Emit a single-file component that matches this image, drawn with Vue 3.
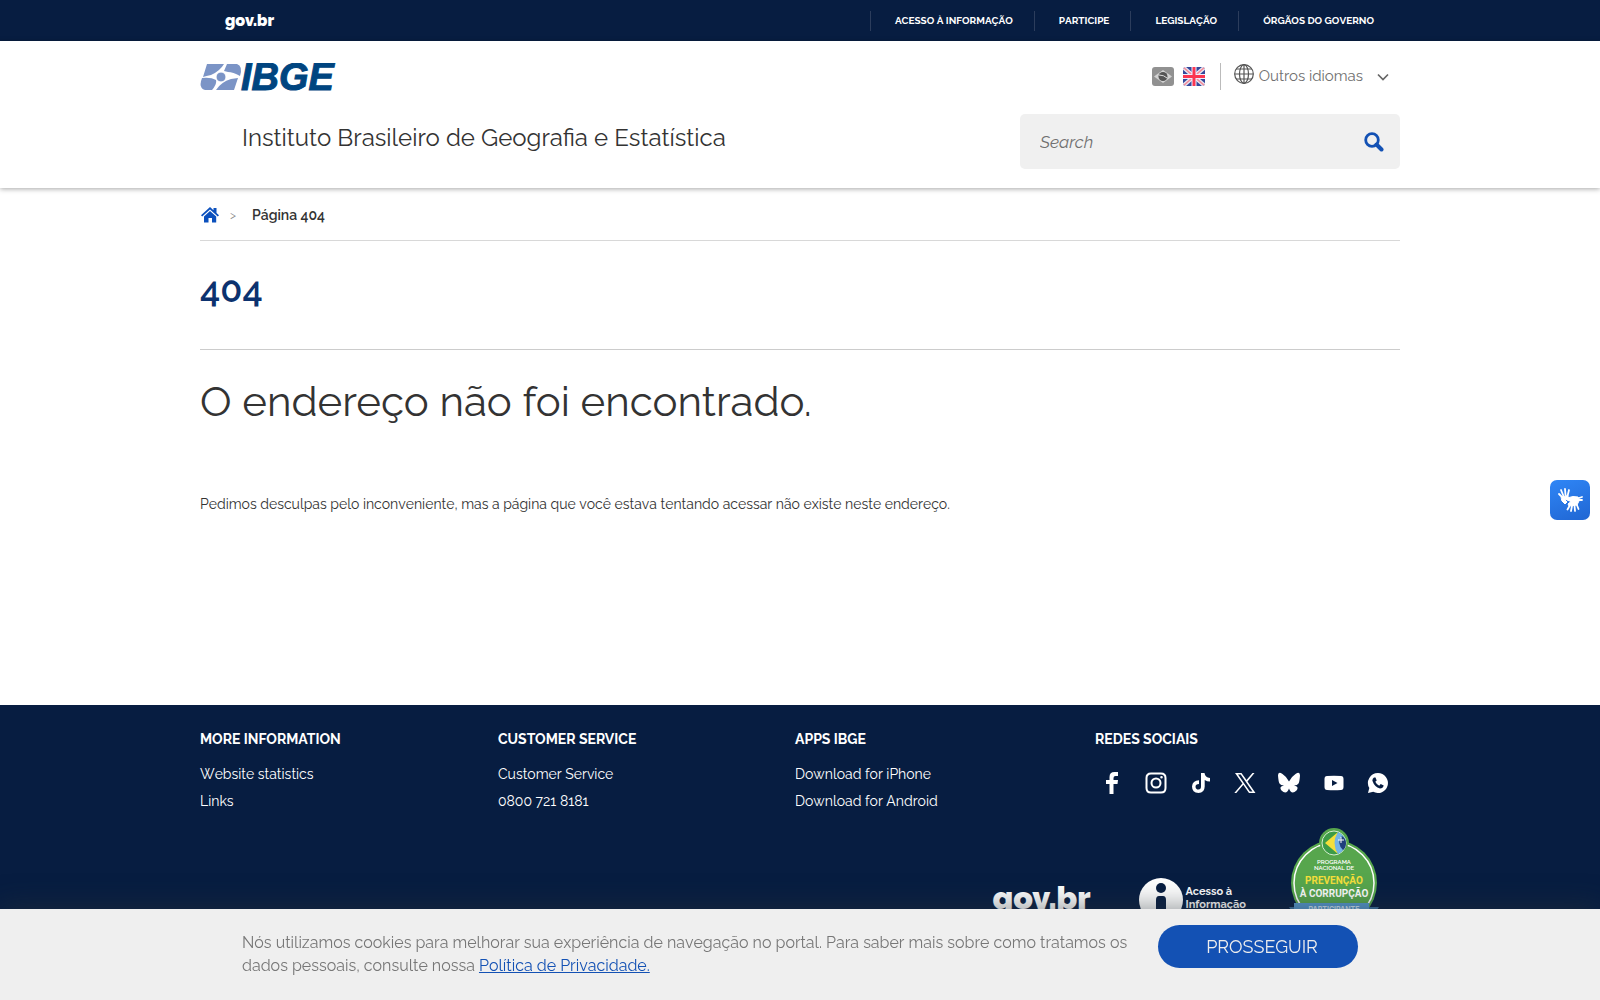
<template>
  <div class="page">
    <div class="gov-bar">
      <div class="container gov-bar-inner">
        <a href="#" class="gov-logo">gov.br</a>
        <nav class="gov-links">
          <a v-for="item in govLinks" :key="item" href="#">{{ item }}</a>
        </nav>
      </div>
    </div>

    <header class="header">
      <div class="container">
        <div class="header-top">
          <a href="#" class="ibge-logo" aria-label="IBGE">
            <svg width="150" height="36" viewBox="0 0 150 36">
              <g fill="#7b94c6">
                <path d="M7 1H24Q20 8 11 12Q6 13 3 14Z" />
                <path d="M27 1H37Q43 3 40 13Q33 9 28 9L24 8Z" />
                <path d="M2 15Q11 14 16 17Q17 21 12 27H5Q-2 25 2 15Z" />
                <path d="M38 15L34 27H16Q21 19 31 16Z" />
                <circle cx="21" cy="14" r="5" stroke="#fff" stroke-width="1" />
              </g>
              <text x="41" y="27" class="ibge-word">IBGE</text>
            </svg>
          </a>
          <div class="languages">
            <a href="#" class="flag" aria-label="Português">
              <svg width="22" height="19" viewBox="0 0 22 19">
                <rect width="22" height="19" rx="3" fill="#919191" />
                <path d="M2 9.500L11 3L20 9.500L11 16Z" fill="#d2d2d2" />
                <circle cx="11" cy="9.500" r="4.500" fill="#555" />
                <path d="M7 8Q12 8 15 11" fill="none" stroke="#ddd" stroke-width="1" />
              </svg>
            </a>
            <a href="#" class="flag" aria-label="English">
              <svg width="22" height="19" viewBox="0 0 22 19">
                <defs>
                  <clipPath id="uk"><rect width="22" height="19" rx="3" /></clipPath>
                </defs>
                <g clip-path="url(#uk)">
                  <rect width="22" height="19" fill="#34489b" />
                  <path d="M0 0L22 19M22 0L0 19" stroke="#e6e8f2" stroke-width="4" />
                  <path d="M0 0L22 19M22 0L0 19" stroke="#f58a9a" stroke-width="1.500" />
                  <path d="M11 0V19M0 9.500H22" stroke="#eef" stroke-width="5" />
                  <path d="M11 0V19M0 9.500H22" stroke="#fb3650" stroke-width="3" />
                </g>
              </svg>
            </a>
            <button type="button" class="other-languages">
              <svg class="globe" width="20" height="20" viewBox="0 0 20 20" fill="none" stroke="#555" stroke-width="1.200">
                <circle cx="10" cy="10" r="9.300" />
                <ellipse cx="10" cy="10" rx="4.500" ry="9.300" />
                <path d="M10 .7V19.300M.7 10H19.300M2.200 5H17.800M2.200 15H17.800" />
              </svg>
              <span>Outros idiomas</span>
              <svg class="chevron" width="14" height="10" viewBox="0 0 14 10" fill="none" stroke="#666" stroke-width="1.700">
                <path d="M2 2.500L7 7.500L12 2.500" />
              </svg>
            </button>
          </div>
        </div>
        <div class="header-bottom">
          <p class="site-name">Instituto Brasileiro de Geografia e Estatística</p>
          <form class="search" @submit.prevent>
            <input v-model="query" type="text" placeholder="Search" aria-label="Search" />
            <button type="submit" aria-label="Search">
              <svg width="20" height="20" viewBox="0 0 20 20" fill="none" stroke="#1351b4">
                <circle cx="8" cy="8" r="6.300" stroke-width="2.800" />
                <path d="M12.500 12.500L17.500 17.500" stroke-width="4" stroke-linecap="round" />
              </svg>
            </button>
          </form>
        </div>
      </div>
    </header>

    <main class="container main">
      <nav class="breadcrumb">
        <a href="#" aria-label="Home">
          <svg width="18" height="16" viewBox="0 0 18 16" fill="#0b50bd">
            <path d="M9 0L12.500 3.200V1H15.500V6L18 8.300L16.800 9.500L9 2.600L1.200 9.500L0 8.300Z" />
            <path d="M9 4L15.200 9.500V15.500H11V11H7.500V15.500H3V9.500Z" />
          </svg>
        </a>
        <span class="arrow">&gt;</span>
        <strong>Página 404</strong>
      </nav>
      <h1>404</h1>
      <h2>O endereço não foi encontrado.</h2>
      <p class="message">
        Pedimos desculpas pelo inconveniente, mas a página que você estava tentando acessar não existe neste endereço.
      </p>
    </main>

    <footer class="footer">
      <div class="container">
        <div class="footer-columns">
          <section v-for="column in columns" :key="column.title">
            <h3>{{ column.title }}</h3>
            <ul>
              <li v-for="link in column.links" :key="link"><a href="#">{{ link }}</a></li>
            </ul>
          </section>
          <section>
            <h3>REDES SOCIAIS</h3>
            <div class="social">
              <a v-for="icon in socialIcons" :key="icon.name" href="#" :aria-label="icon.name">
                <svg width="24" height="24" viewBox="0 0 24 24">
                  <path :d="icon.path" fill="#fff" fill-rule="evenodd" />
                </svg>
              </a>
            </div>
          </section>
        </div>

        <div class="footer-logos">
          <a href="#" class="gov-logo large">gov.br</a>
          <a href="#" class="info-access">
            <svg width="44" height="44" viewBox="0 0 44 44">
              <circle cx="22" cy="22" r="22" fill="#fff" />
              <circle cx="22" cy="10" r="5" fill="#071d41" />
              <path d="M17 22Q17 18 20 18H24Q27 18 27 22V38H17Z" fill="#071d41" />
            </svg>
            <span>Acesso à<br />Informação</span>
          </a>
          <a href="#" aria-label="Programa Nacional de Prevenção à Corrupção">
            <svg width="90" height="106" viewBox="0 0 90 106">
              <circle cx="45" cy="15" r="15" fill="#57a64d" />
              <circle cx="45" cy="55" r="43" fill="#57a64d" />
              <circle cx="45" cy="55" r="40" fill="none" stroke="#fff" stroke-width="1.500" />
              <circle cx="45" cy="15" r="14" fill="#57a64d" />
              <circle cx="45" cy="15" r="12" fill="#3c9b48" stroke="#d7edcf" stroke-width="1" />
              <path d="M36 15L49 4Q44 15 49 26Z" fill="#f4df3b" />
              <path d="M49 4Q57 8 57 15Q57 22 49 26Q42 15 49 4Z" fill="#74b4e6" />
              <path d="M53 8Q57 11 57 15Q57 20 54 22Q47 15 53 8Z" fill="#203f7c" />
              <path d="M49 12H55M52 9V15" stroke="#fff" stroke-width="1" />
              <g text-anchor="middle" fill="#fff">
                <text x="45" y="36" class="badge-small">PROGRAMA</text>
                <text x="45" y="42" class="badge-small">NACIONAL DE</text>
                <text x="45" y="56" class="badge-title yellow">PREVENÇÃO</text>
                <text x="45" y="69" class="badge-title">À CORRUPÇÃO</text>
              </g>
              <path d="M0 79H90L85 86L90 92H0L5 86Z" fill="#396e9f" />
              <path d="M5 75H80V89H5Z" fill="#5598cf" />
              <text x="45" y="84" text-anchor="middle" class="badge-ribbon">PARTICIPANTE</text>
            </svg>
          </a>
        </div>
      </div>
    </footer>

    <button type="button" class="libras" aria-label="Libras">
      <svg width="26" height="26" viewBox="0 0 26 26" fill="none" stroke="#fff" stroke-linecap="round">
        <path d="M5 10L2 7M6.500 9L4 3M8.500 8L8 2M10.500 9L12 3" stroke-width="1.800" />
        <path d="M4.500 10L11 8.500L11 12L8 13L10 15L8 17L5 14Z" fill="#fff" stroke-width="1" />
        <path d="M10 11L16 9.500L21 10L22.500 13L20 18L12 19L11 17L14 14.500L10 13Z" fill="#fff" stroke-width="1" />
        <path d="M12.500 19L10.500 22.500M15 19L14 24M17.500 18.500L18 24M19.500 17L21.500 22M22 11L25 10M22.500 13L25 13" stroke-width="1.800" />
      </svg>
    </button>

    <div v-if="showCookies" class="cookie-bar">
      <div class="container cookie-inner">
        <p>
          Nós utilizamos cookies para melhorar sua experiência de navegação no portal. Para saber mais sobre como tratamos os
          dados pessoais, consulte nossa <a href="#">Política de Privacidade.</a>
        </p>
        <button type="button" @click="showCookies = false">PROSSEGUIR</button>
      </div>
    </div>
  </div>
</template>

<script setup>
import { ref } from 'vue'

const query = ref('')
const showCookies = ref(true)

const govLinks = ['ACESSO À INFORMAÇÃO', 'PARTICIPE', 'LEGISLAÇÃO', 'ÓRGÃOS DO GOVERNO']

const columns = [
  { title: 'MORE INFORMATION', links: ['Website statistics', 'Links'] },
  { title: 'CUSTOMER SERVICE', links: ['Customer Service', '0800 721 8181'] },
  { title: 'APPS IBGE', links: ['Download for iPhone', 'Download for Android'] },
]

const socialIcons = [
  { name: 'Facebook', path: 'M9.500 23V13H6V9H9.500V6Q9.500 1 14.500 1H18V5H15.500Q13.500 5 13.500 7V9H18L17.500 13H13.500V23Z' },
  {
    name: 'Instagram',
    path: 'M7 1.500H17Q22.500 1.500 22.500 7V17Q22.500 22.500 17 22.500H7Q1.500 22.500 1.500 17V7Q1.500 1.500 7 1.500ZM7 3.500Q3.500 3.500 3.500 7V17Q3.500 20.500 7 20.500H17Q20.500 20.500 20.500 17V7Q20.500 3.500 17 3.500ZM12 6.500A5.500 5.500 0 1 1 12 17.500A5.500 5.500 0 1 1 12 6.500ZM12 8.500A3.500 3.500 0 1 0 12 15.500A3.500 3.500 0 1 0 12 8.500ZM17.500 5A1.300 1.300 0 1 1 17.500 7.600A1.300 1.300 0 1 1 17.500 5Z',
  },
  {
    name: 'TikTok',
    path: 'M12 2H15.500Q16 6.500 21 7V10.500Q18 10.500 15.700 9V15.500Q15.500 22 9.500 22Q3 21.500 3 15.500Q3.500 9.500 10 9.300V13Q6.500 13 6.500 15.700Q6.700 18.500 9.500 18.500Q12 18.300 12 15.500Z',
  },
  { name: 'X', path: 'M2 2H8.500L13.500 9L19.500 2H21.500L14.500 10.500L22.500 22H16L10.300 13.700L3.300 22H1.300L9.400 12.400ZM5 3.500L16.800 20.500H19.500L7.700 3.500Z' },
  {
    name: 'Bluesky',
    path: 'M12 10.500Q10 6 5.500 3Q1 0 1 4.500Q1.500 11 2.500 12.500Q3.500 14.500 7 14.500Q1.500 15.500 4.500 19.500Q9.500 24.500 12 17.500Q14.500 24.500 19.500 19.500Q22.500 15.500 17 14.500Q20.500 14.500 21.500 12.500Q22.500 11 23 4.500Q23 0 18.500 3Q14 6 12 10.500Z',
  },
  { name: 'YouTube', path: 'M5 5Q12 4.500 19 5Q21.500 5 21.500 8V16Q21.500 19 19 19Q12 19.500 5 19Q2.500 19 2.500 16V8Q2.500 5 5 5ZM10 9V15L15.500 12Z' },
  {
    name: 'WhatsApp',
    path: 'M12 2A10 10 0 1 1 7.200 20.800L2 22L3.300 17A10 10 0 0 1 12 2ZM8 6.500Q6 8 6.500 10Q8.500 16 14 17.500Q17 17.500 17.700 14.500L14.700 13L13.200 14.700Q10.500 13.500 9.300 10.800L10.700 9.500L9.500 6.500Z',
  },
]
</script>

<style>
body {
  background: #fff;
}
</style>

<style scoped>
.page {
  font-family: Raleway, Lato, sans-serif;
  font-size: 14px;
  font-variant-numeric: oldstyle-nums;
  color: #333;
}

.container {
  max-width: 1200px;
  margin: 0 auto;
}

a {
  color: inherit;
  text-decoration: none;
}

button {
  border: 0;
  padding: 0;
  background: none;
  font: inherit;
  cursor: pointer;
}

svg {
  display: block;
}

.gov-bar {
  background: #071d41;
  color: #fff;
}

.gov-bar-inner {
  display: flex;
  justify-content: space-between;
  align-items: center;
  height: 41px;
}

.gov-logo {
  margin-left: 25px;
  font: 900 16px/20px Raleway, sans-serif;
  color: #fff;
}

.gov-links {
  display: flex;
}

.gov-links a {
  padding: 0 21px 0 24px;
  border-left: 1px solid #2c3d5c;
  font-size: 10px;
  font-weight: 700;
  line-height: 20px;
  font-kerning: none;
}

.gov-links a:last-child {
  padding-right: 26px;
}

.header {
  background: #fff;
  box-shadow: 0 1px 5px rgba(0, 0, 0, 0.35);
}

.header-top {
  display: flex;
  justify-content: space-between;
  align-items: flex-start;
  padding-top: 22px;
}

.ibge-word {
  font: italic 700 38px "Liberation Sans", sans-serif;
  fill: #004580;
  stroke: #004580;
  stroke-width: 1px;
}

.languages {
  display: flex;
  align-items: center;
  gap: 9px;
}

.other-languages {
  display: flex;
  align-items: center;
  gap: 5px;
  margin-left: 6px;
  padding: 0 10px 0 13px;
  border-left: 1px solid #bbb;
  font-size: 15px;
  line-height: 27px;
  color: #707070;
}

.globe {
  margin-bottom: 5px;
}

.chevron {
  margin-left: 8px;
}

.header-bottom {
  display: flex;
  justify-content: space-between;
  padding: 15px 0 19px;
}

.site-name {
  margin: 8px 0 0 42px;
  font-size: 24px;
  line-height: 32px;
}

.search {
  display: flex;
  align-items: center;
  width: 380px;
  height: 55px;
  border-radius: 5px;
  background: #f0f0f0;
}

.search input {
  flex: 1;
  min-width: 0;
  padding: 0 20px;
  border: 0;
  background: none;
  font: italic 17px Raleway, Lato, sans-serif;
  outline: none;
}

.search input::placeholder {
  color: #707070;
}

.search button {
  padding: 0 16px;
}

.main {
  min-height: 517px;
}

.breadcrumb {
  display: flex;
  align-items: center;
  height: 50px;
  padding: 2px 1px 0;
  border-bottom: 1px solid #d8d8d8;
}

.breadcrumb .arrow {
  margin: 0 16px 0 11px;
  font-size: 12px;
  color: #888;
}

.breadcrumb strong {
  font-weight: 600;
}

h1 {
  margin: 0;
  padding: 26px 0 38px;
  border-bottom: 1px solid #ccc;
  font-size: 36px;
  line-height: 44px;
  font-weight: 600;
  color: #0c326f;
}

h2 {
  margin: 24px 0 0;
  font-size: 42px;
  line-height: 56px;
  font-weight: 400;
}

.message {
  margin: 64px 0 0;
  line-height: 20px;
  font-kerning: none;
}

.footer {
  background: #071d41;
  color: #fff;
}

.footer-columns {
  display: grid;
  grid-template-columns: 298px 297px 300px 1fr;
  padding-top: 24px;
}

h3 {
  margin: 0 0 12px;
  font-size: 14px;
  line-height: 20px;
  font-weight: 700;
}

ul {
  margin: 0;
  padding: 0;
  list-style: none;
}

li {
  line-height: 27px;
  font-kerning: none;
}

.social {
  display: flex;
  justify-content: space-between;
  padding: 10px 10px 0 5px;
}

.footer-logos {
  display: flex;
  justify-content: flex-end;
  align-items: flex-start;
  padding: 13px 21px 70px 0;
}

.gov-logo.large {
  margin: 50px 0 0;
  font-size: 32px;
  line-height: 40px;
}

.info-access {
  display: flex;
  align-items: center;
  gap: 3px;
  margin: 50px 43px 0 48px;
  font-size: 11px;
  line-height: 13px;
  font-weight: 700;
}

.info-access span {
  margin-top: -4px;
}

.badge-small {
  font: 600 6px Raleway, sans-serif;
}

.badge-title {
  font: 700 10px Roboto, sans-serif;
}

.badge-title.yellow {
  fill: #f4df3b;
}

.badge-ribbon {
  font: 700 7px Inter, sans-serif;
  fill: #cfe4f5;
}

.libras {
  position: fixed;
  right: 10px;
  top: 50%;
  display: grid;
  place-items: center;
  width: 40px;
  height: 40px;
  margin-top: -20px;
  border-radius: 7px;
  background: linear-gradient(160deg, #2f86f6, #2066d3);
}

.cookie-bar {
  position: fixed;
  left: 0;
  right: 0;
  bottom: 0;
  background: #efefef;
  box-shadow: 0 0 30px rgba(40, 50, 55, 0.6);
}

.cookie-inner {
  display: flex;
  justify-content: space-between;
  align-items: flex-start;
  gap: 20px;
  padding: 16px 0;
  min-height: 59px;
}

.cookie-inner p {
  flex: 1;
  margin: 6px 0 0 42px;
  font-size: 16px;
  line-height: 23px;
  font-kerning: none;
  color: #777;
}

.cookie-inner p a {
  color: #1351b4;
  text-decoration: underline;
}

.cookie-inner button {
  width: 200px;
  margin-right: 42px;
  padding-left: 8px;
  border-radius: 22px;
  background: #1351b4;
  font-size: 18px;
  line-height: 43px;
  color: #eee;
}
</style>
